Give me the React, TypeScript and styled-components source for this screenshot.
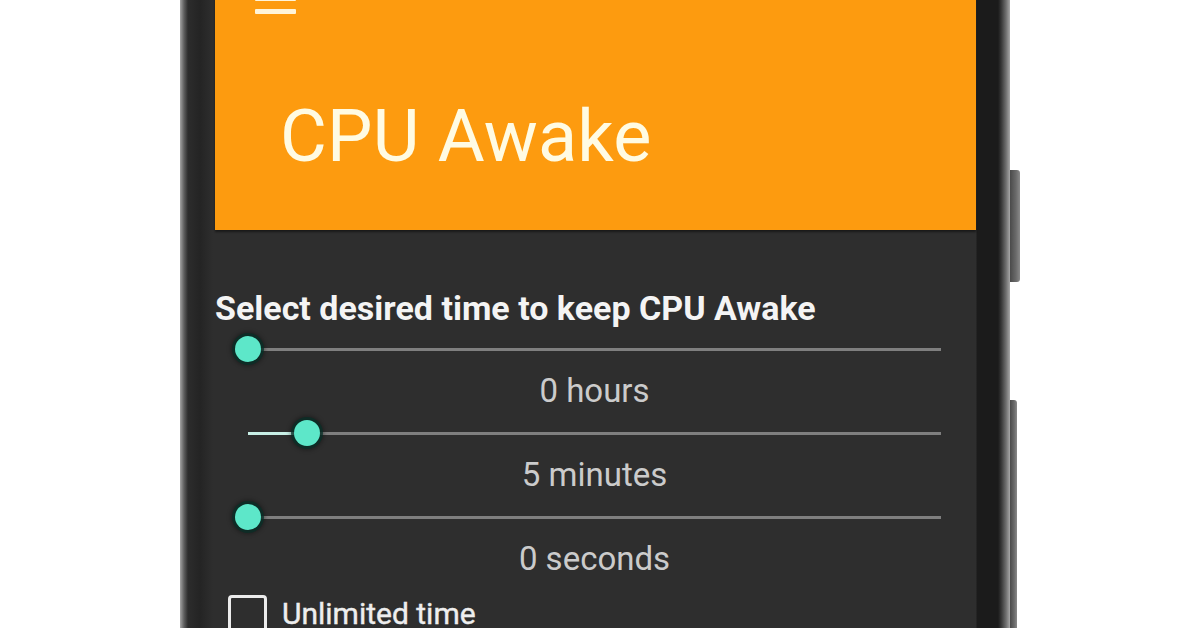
import React from "react";
import styled, { createGlobalStyle } from "styled-components";

/* global */
const GlobalStyle = createGlobalStyle`
  html, body {
    margin: 0;
    padding: 0;
    background: #ffffff;
  }
  * {
    box-sizing: border-box;
  }
`;

/* data */
interface SliderData {
  value: number;
  max: number;
  label: string;
}

const sliders: SliderData[] = [
  { value: 0, max: 24, label: "0 hours" },
  { value: 5, max: 59, label: "5 minutes" },
  { value: 0, max: 59, label: "0 seconds" },
];

/* layout */
const Stage = styled.div`
  height: 628px;
  overflow: hidden;
  display: flex;
  align-items: flex-start;
  padding-left: 180px;
  font-family: Roboto, "Noto Sans", "Liberation Sans", sans-serif;
`;

const Device = styled.div`
  display: flex;
  margin-top: -40px;
  height: 720px;
`;

const PhoneBody = styled.div`
  width: 830px;
  height: 100%;
  display: flex;
  padding: 0 34px 0 35px;
  background: linear-gradient(
    to right,
    #a4a4a4 0px,
    #5e5e5e 4px,
    #2c2c2c 8px,
    #242424 20px,
    #2e2e2e 33px,
    #2e2e2e 796px,
    #1b1b1b 797px,
    #1b1b1b 818px,
    #343434 821px,
    #6e6e6e 826px,
    #a8a8a8 830px
  );
`;

const SideRail = styled.div`
  display: flex;
  flex-direction: column;
  padding-top: 210px;
`;

const SideKey = styled.div<{ $width: number; $height?: number; $gap?: number }>`
  width: ${(p) => p.$width}px;
  height: ${(p) => (p.$height ? `${p.$height}px` : "auto")};
  flex: ${(p) => (p.$height ? "none" : "1")};
  margin-top: ${(p) => p.$gap ?? 0}px;
  border-radius: 0 3px 3px 0;
  background: linear-gradient(to right, #4a4a4a, #6a6a6a 60%, #8a8a8a);
`;

const Screen = styled.div`
  width: 761px;
  height: 100%;
  display: flex;
  flex-direction: column;
  background: #2e2e2e;
`;

/* header */
const Header = styled.header`
  height: 270px;
  flex: none;
  padding: 23px 0 0 40px;
  background: #fd9b0f;
  box-shadow: 0 2px 2px rgba(0, 0, 0, 0.45);
  position: relative;
  z-index: 1;
`;

const MenuIcon = styled.div`
  width: 41px;
  display: flex;
  flex-direction: column;
  gap: 8px;
  span {
    display: block;
    height: 5px;
    background: #fff4d8;
    border-radius: 1px;
  }
`;

const Title = styled.h1`
  margin: 81px 0 0 25px;
  font-size: 72px;
  line-height: 84px;
  font-weight: 400;
  color: #fffbe3;
  letter-spacing: 0.2px;
`;

/* content */
const Content = styled.main`
  flex: 1;
  padding-top: 58px;
`;

const Heading = styled.h2`
  margin: 0;
  font-size: 34px;
  line-height: 40px;
  font-weight: 700;
  color: #f4f4f4;
`;

const SliderList = styled.div`
  margin-top: 6px;
  display: flex;
  flex-direction: column;
`;

const SliderGroup = styled.div`
  display: flex;
  flex-direction: column;
  margin: 0 35px 8px 33px;
`;

const Track = styled.div`
  position: relative;
  height: 30px;
  &::before {
    content: "";
    position: absolute;
    left: 0;
    right: 0;
    top: 14px;
    height: 3px;
    background: #7f7f7f;
  }
`;

const Fill = styled.div`
  position: absolute;
  left: 0;
  top: 14px;
  height: 3px;
  background: #c8efe6;
`;

const Thumb = styled.div`
  position: absolute;
  top: 2px;
  width: 26px;
  height: 26px;
  margin-left: -13px;
  border-radius: 50%;
  background: #5de7c9;
  box-shadow: 0 0 0 3px rgba(8, 48, 40, 0.75), 0 0 4px 4px rgba(0, 0, 0, 0.35);
`;

const ValueLabel = styled.div`
  margin-top: 8px;
  text-align: center;
  font-size: 33px;
  line-height: 38px;
  color: #cbcbcb;
`;

const CheckRow = styled.label`
  display: flex;
  align-items: flex-start;
  gap: 15px;
  margin: 9px 0 0 13px;
`;

const CheckBox = styled.span`
  width: 39px;
  height: 39px;
  flex: none;
  border: 3.5px solid #ececec;
  border-radius: 4px;
`;

const CheckText = styled.span`
  font-size: 30px;
  line-height: 38px;
  font-weight: 400;
  color: #eeeeee;
  -webkit-text-stroke: 0.4px #eeeeee;
`;

/* component */
const TimeSlider: React.FC<{ data: SliderData }> = ({ data }) => {
  const pct = (data.value / data.max) * 100;
  return (
    <SliderGroup>
      <Track>
        <Fill style={{ width: `${pct}%` }} />
        <Thumb style={{ left: `${pct}%` }} />
      </Track>
      <ValueLabel>{data.label}</ValueLabel>
    </SliderGroup>
  );
};

const App: React.FC = () => {
  return (
    <>
      <GlobalStyle />
      <Stage>
        <Device>
          <PhoneBody>
            <Screen>
              <Header>
                <MenuIcon>
                  <span />
                  <span />
                  <span />
                </MenuIcon>
                <Title>CPU Awake</Title>
              </Header>
              <Content>
                <Heading>Select desired time to keep CPU Awake</Heading>
                <SliderList>
                  {sliders.map((s) => (
                    <TimeSlider key={s.label} data={s} />
                  ))}
                </SliderList>
                <CheckRow>
                  <CheckBox />
                  <CheckText>Unlimited time</CheckText>
                </CheckRow>
              </Content>
            </Screen>
          </PhoneBody>
          <SideRail>
            <SideKey $width={10} $height={112} />
            <SideKey $width={7} $gap={118} />
          </SideRail>
        </Device>
      </Stage>
    </>
  );
};

export default App;
